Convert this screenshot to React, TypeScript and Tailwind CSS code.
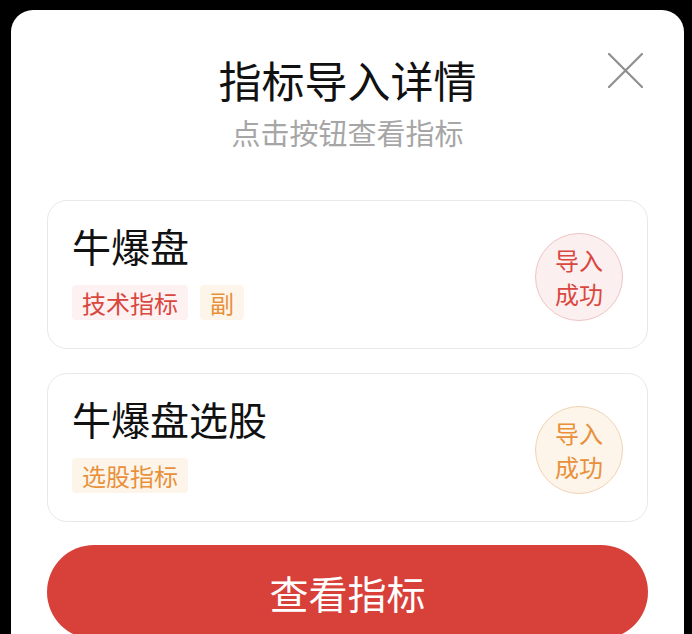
type Tag = { label: string; tone: "red" | "orange" };

type Item = {
  name: string;
  tags: Tag[];
  tone: "red" | "orange";
};

const items: Item[] = [
  {
    name: "牛爆盘",
    tags: [
      { label: "技术指标", tone: "red" },
      { label: "副", tone: "orange" },
    ],
    tone: "red",
  },
  {
    name: "牛爆盘选股",
    tags: [{ label: "选股指标", tone: "orange" }],
    tone: "orange",
  },
];

const tagStyle = {
  red: "bg-[#fdf1f1] text-[#d9473f]",
  orange: "bg-[#fdf5ea] text-[#e8903a]",
};

const stampStyle = {
  red: "bg-[#fcefef] border-[#efc4c4] text-[#d9473f]",
  orange: "bg-[#fdf4ea] border-[#f1d3b3] text-[#e8903a]",
};

function IndicatorCard({ item }: { item: Item }) {
  return (
    <div className="flex items-center justify-between rounded-[20px] border border-[#e8e8e8] bg-white pl-6 pr-6 pt-[20px] pb-[27px]">
      <div className="flex flex-col">
        <h3 className="text-[39px] leading-[44px] text-[#111]">{item.name}</h3>
        <div className="mt-[18px] flex gap-3">
          {item.tags.map((t) => (
            <span
              key={t.label}
              className={`h-[35px] rounded-[4px] px-[10px] text-[24px] leading-[35px] ${tagStyle[t.tone]}`}
            >
              {t.label}
            </span>
          ))}
        </div>
      </div>
      <div
        className={`mt-3 flex h-[88px] w-[88px] flex-col items-center justify-center rounded-full border text-[24px] leading-[34px] ${stampStyle[item.tone]}`}
      >
        <span>导入</span>
        <span>成功</span>
      </div>
    </div>
  );
}

export default function App() {
  return (
    <div
      className="min-h-screen overflow-hidden bg-black pt-[10px] pl-[11px]"
      style={{ fontFamily: '"Noto Sans CJK SC", "Noto Sans", sans-serif' }}
    >
      <div className="relative w-[673px] rounded-[22px] bg-white px-[36px] pt-[44px] pb-10">
        {/* 閉じる */}
        <button className="absolute right-[41px] top-[43px]">
          <svg width="35" height="35" viewBox="0 0 35 35" fill="none">
            <path d="M1 1 L34 34 M34 1 L1 34" stroke="#8f8f8f" strokeWidth="2.2" strokeLinecap="round" />
          </svg>
        </button>
        <h2 className="text-center text-[43px] leading-[50px] text-[#111]">
          指标导入详情
        </h2>
        <p className="mt-[10px] text-center text-[29px] leading-[36px] text-[#a6a6a6]">
          点击按钮查看指标
        </p>

        <div className="mt-[50px] flex flex-col gap-[24px]">
          {items.map((it) => (
            <IndicatorCard key={it.name} item={it} />
          ))}
        </div>

        <button className="mt-[23px] h-[94px] w-full rounded-full bg-[#d8403a] text-[39px] text-white">
          查看指标
        </button>
      </div>
    </div>
  );
}
